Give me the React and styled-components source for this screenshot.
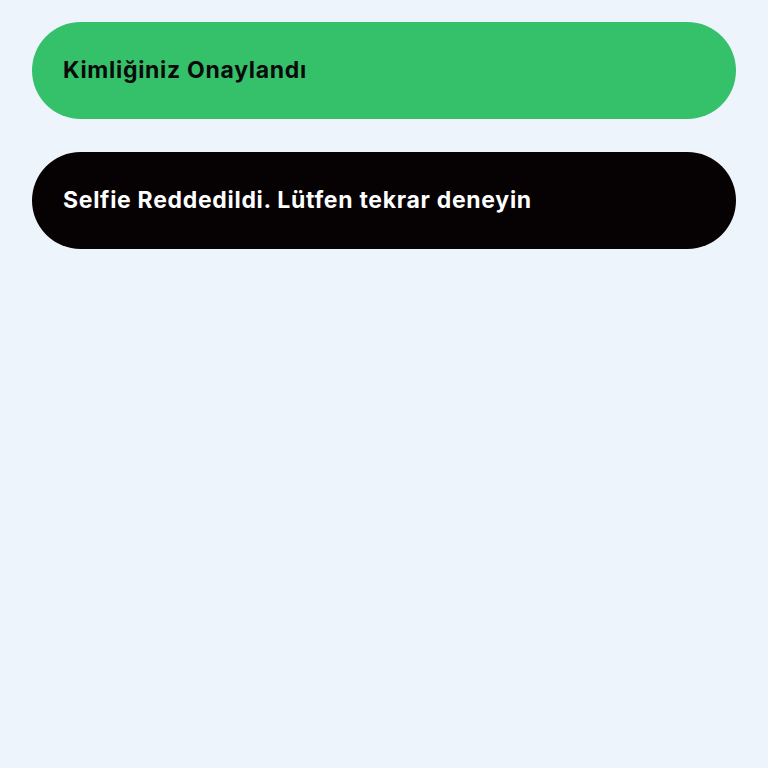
import React from "react";
import styled, { createGlobalStyle } from "styled-components";

const Global = createGlobalStyle`
  html, body { margin: 0; padding: 0; background: #eef4fc; }
  body { font-family: Inter, "Noto Sans", sans-serif; }
`;

const Page = styled.div`
  min-height: 768px;
  box-sizing: border-box;
  padding: 22px 32px;
  display: flex;
  flex-direction: column;
  gap: 33px;
  background: #eef4fc;
`;

const Toast = styled.div`
  height: 97px;
  border-radius: 49px;
  display: flex;
  align-items: center;
  padding: 0 31px;
  box-sizing: border-box;
  background: ${(p) => (p.$variant === "success" ? "#35c06a" : "#060103")};
  color: ${(p) => (p.$variant === "success" ? "#0a0a0a" : "#ffffff")};
  font-size: 23px;
  font-weight: 700;
  letter-spacing: 0.7px;
  line-height: 1;
`;

export default function App() {
  return (
    <>
      <Global />
      <Page>
        <Toast $variant="success">Kimliğiniz Onaylandı</Toast>
        <Toast $variant="error">Selfie Reddedildi. Lütfen tekrar deneyin</Toast>
      </Page>
    </>
  );
}
